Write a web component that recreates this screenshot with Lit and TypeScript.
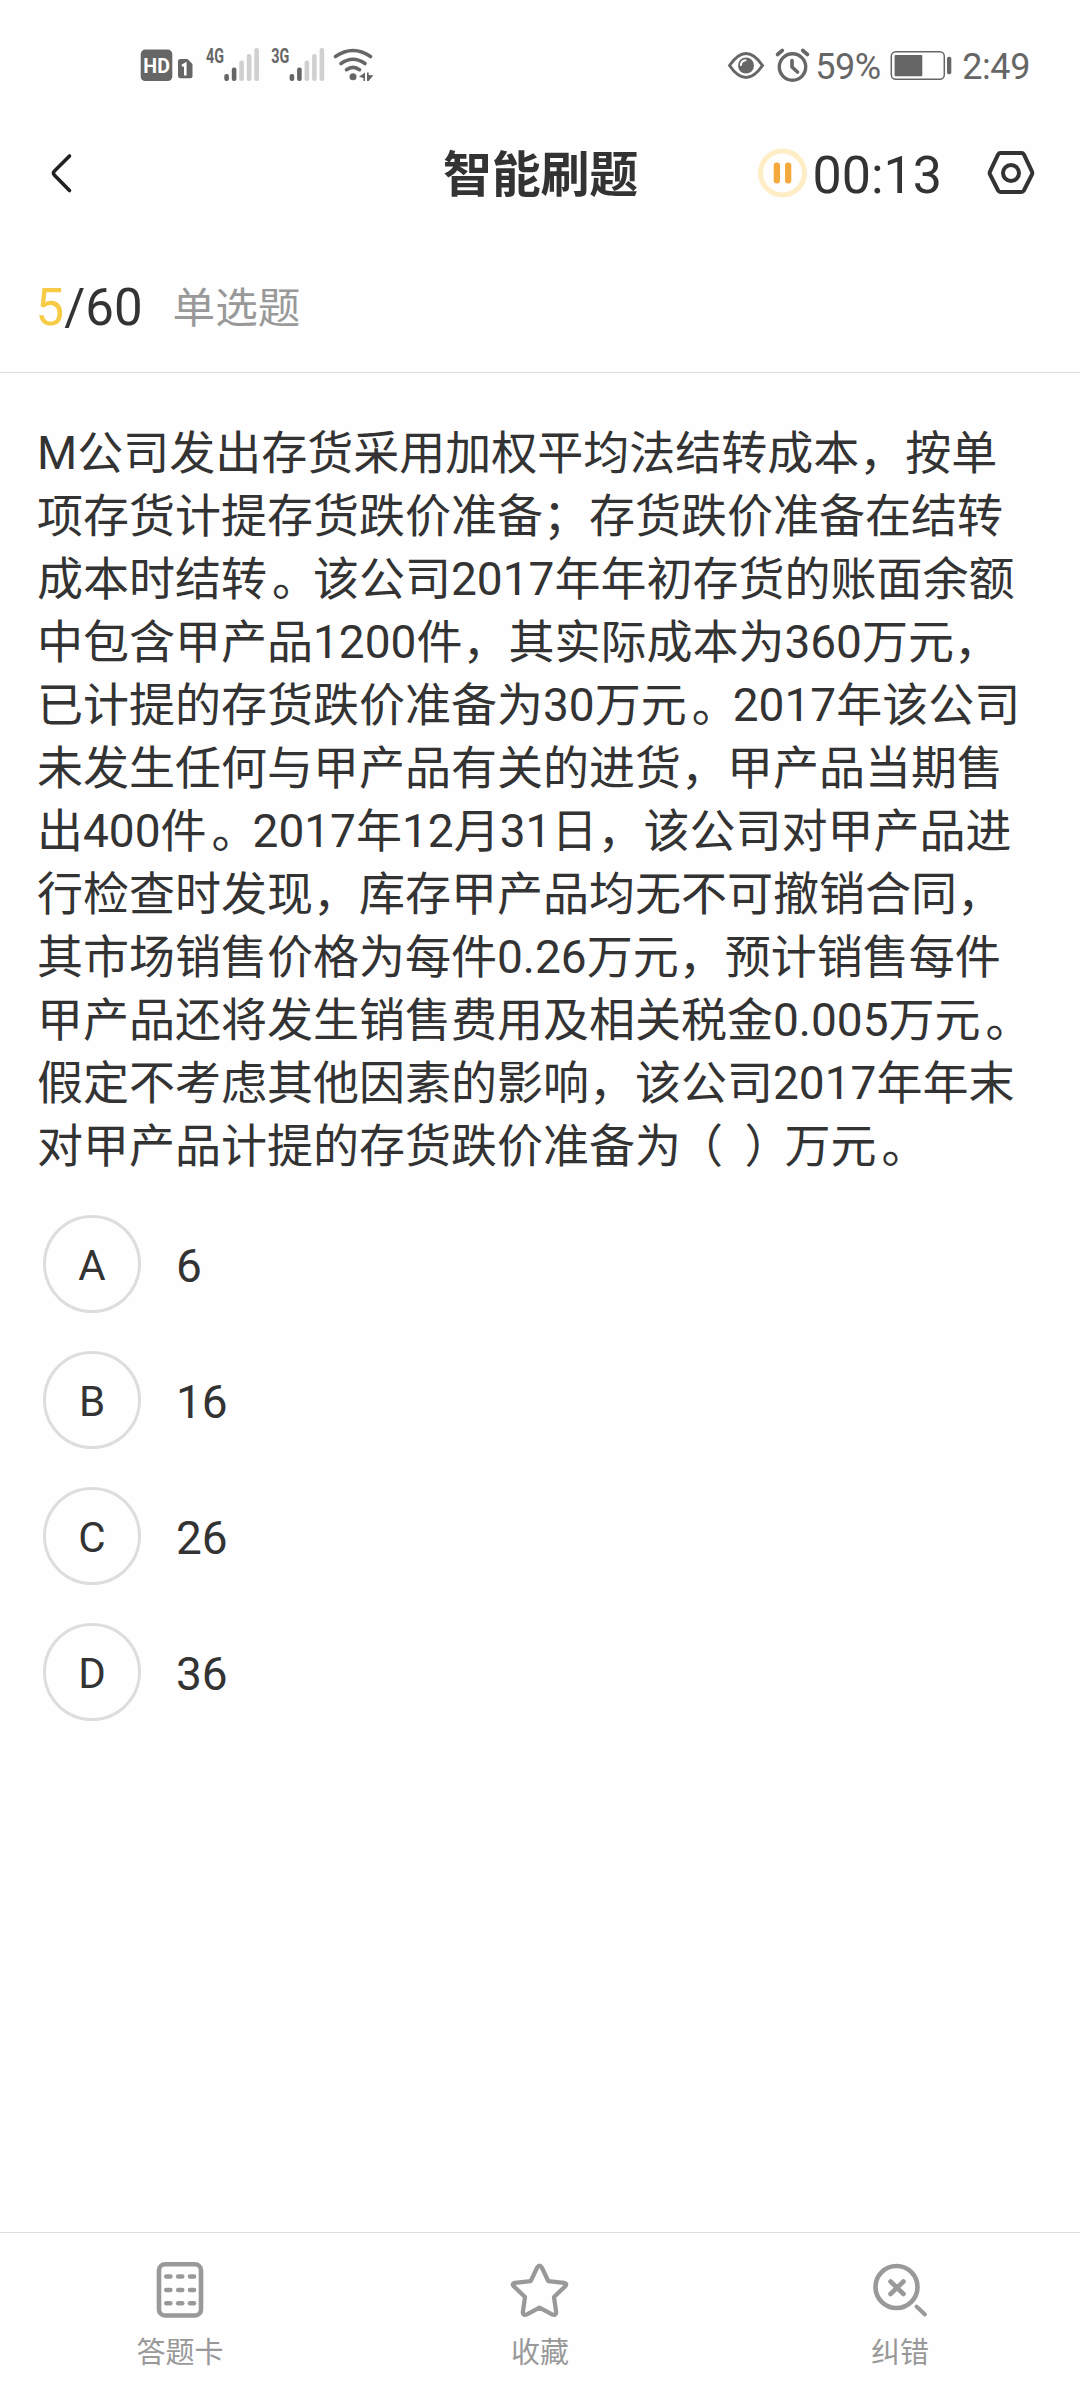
import { LitElement, html, css, svg } from "lit";
import { customElement, property, state } from "lit/decorators.js";

const FONT = css`Roboto, "Noto Sans CJK SC", sans-serif`;

const QUESTION_LINES = [
  "M公司发出存货采用加权平均法结转成本，按单",
  "项存货计提存货跌价准备；存货跌价准备在结转",
  "成本时结转。该公司2017年年初存货的账面余额",
  "中包含甲产品1200件，其实际成本为360万元，",
  "已计提的存货跌价准备为30万元。2017年该公司",
  "未发生任何与甲产品有关的进货，甲产品当期售",
  "出400件。2017年12月31日，该公司对甲产品进",
  "行检查时发现，库存甲产品均无不可撤销合同，",
  "其市场销售价格为每件0.26万元，预计销售每件",
  "甲产品还将发生销售费用及相关税金0.005万元。",
  "假定不考虑其他因素的影响，该公司2017年年末",
  "对甲产品计提的存货跌价准备为（ ）万元。",
];

const OPTIONS = [
  { key: "A", value: "6" },
  { key: "B", value: "16" },
  { key: "C", value: "26" },
  { key: "D", value: "36" },
];

// Full-width marks that sit closer to the middle of their cell.
const MARK_CLASS: Record<string, string> = { "。": "mark stop", "（": "mark open", "）": "mark close" };

@customElement("status-bar")
class StatusBar extends LitElement {
  static styles = css`
    :host {
      display: block;
      font-family: ${FONT};
      color: #666;
    }
    .bar {
      display: flex;
      align-items: center;
      justify-content: space-between;
      height: 130px;
      padding: 0 50px 0 140px;
      box-sizing: border-box;
    }
    .group {
      display: flex;
      align-items: center;
    }
    svg {
      display: block;
      flex: none;
    }
    .txt {
      font-size: 36px;
      line-height: 42px;
      white-space: nowrap;
      padding-top: 3px;
    }
    .pct {
      width: 67px;
      margin: 0 8px 0 4px;
      letter-spacing: -0.4px;
    }
    .time {
      margin-left: 10px;
      letter-spacing: -0.4px;
    }
    .hd {
      font-family: Roboto, sans-serif;
      font-weight: 700;
    }
    .net {
      font-family: Roboto, sans-serif;
      font-weight: 700;
    }
  `;

  private signal(label: string, x: number) {
    const tops = [74, 67.5, 60.5, 54, 48];
    return svg`
      <text class="net" x=${x} y="62.8" font-size="21" textLength="18" lengthAdjust="spacingAndGlyphs" fill="#666">${label}</text>
      ${tops.map(
        (t, i) => svg`<rect x=${x + 18.3 + i * 7.5} y=${t} width="4.6" height=${81 - t} rx="2" fill=${i < 2 ? "#666" : "#d0d0d0"}></rect>`
      )}
    `;
  }

  render() {
    return html`
      <div class="bar">
        <div class="group">
          <svg width="236" height="40" viewBox="140 45 236 40">
            <rect x="140.7" y="49.6" width="31.6" height="31.4" rx="4.5" fill="#666"></rect>
            <text class="hd" x="143.3" y="73" font-size="21" textLength="26.6" lengthAdjust="spacingAndGlyphs" fill="#fff">HD</text>
            <path d="M180.5 59h7l5 5v12.3a2 2 0 0 1-2 2h-10a2.5 2.5 0 0 1-2.5-2.5v-14.3a2.5 2.5 0 0 1 2.5-2.5z" fill="#666"></path>
            <path d="M182 65.8l3.3-1.8v11.5" fill="none" stroke="#fff" stroke-width="2.6"></path>
            ${this.signal("4G", 206)} ${this.signal("3G", 271.3)}
            <g fill="none" stroke="#666" stroke-width="3.6" stroke-linecap="round">
              <path d="M335.5 56.5q17.5-12 35 0"></path>
              <path d="M341 63.5q12-8.5 24 0"></path>
              <path d="M346.5 69.7q6.5-4.5 13 0"></path>
            </g>
            <circle cx="353" cy="76.8" r="3.5" fill="#666"></circle>
            <path d="M365 72.5v8.5h-1.6v-3l-4.4-1.2zM367 72.5h1.7v2.6l4.6 0.2-4.6 5.7h-1.7z" fill="#666"></path>
          </svg>
        </div>
        <div class="group">
          <svg width="84" height="40" viewBox="727 45 84 40">
            <path d="M729.5 65.5Q746 41.5 762.5 65.5Q746 89.5 729.5 65.5z" fill="none" stroke="#666" stroke-width="3"></path>
            <circle cx="746" cy="65.5" r="8" fill="#666"></circle>
            <path d="M740.8 65a5.5 5.5 0 0 1 4.7-4.7" fill="none" stroke="#fff" stroke-width="2" stroke-linecap="round"></path>
            <circle cx="792.5" cy="67" r="13.2" fill="none" stroke="#666" stroke-width="3.4"></circle>
            <path d="M777.5 54.5l4.8-4M802.7 50.5l4.8 4" stroke="#666" stroke-width="3.6" stroke-linecap="round"></path>
            <path d="M792 60.5v6.5l5.5 5" fill="none" stroke="#666" stroke-width="3.6" stroke-linecap="round" stroke-linejoin="round"></path>
          </svg>
          <span class="txt pct">59%</span>
          <svg width="62" height="40" viewBox="890 45 62 40">
            <rect x="891.3" y="51.8" width="53" height="27.5" rx="4.5" fill="none" stroke="#666" stroke-width="1.5"></rect>
            <rect x="894.6" y="55" width="27.7" height="21.3" rx="1" fill="#666"></rect>
            <rect x="947" y="56.8" width="4.3" height="17.5" rx="1.8" fill="#666"></rect>
          </svg>
          <span class="txt time">2:49</span>
        </div>
      </div>
    `;
  }
}

@customElement("quiz-header")
class QuizHeader extends LitElement {
  @property() time = "";

  static styles = css`
    :host {
      display: block;
      font-family: ${FONT};
      color: #333;
    }
    .bar {
      display: grid;
      grid-template-columns: 1fr auto 1fr;
      align-items: center;
      height: 86px;
      padding: 0 45px 0 49px;
    }
    .title {
      font-size: 49px;
      line-height: 60px;
      font-weight: 700;
      letter-spacing: -0.2px;
      padding-top: 6px;
      margin-right: 3px;
    }
    .right {
      display: flex;
      align-items: center;
      justify-content: flex-end;
    }
    .clock {
      font-size: 52px;
      line-height: 60px;
      margin: 6px 45px 0 5px;
    }
    svg {
      display: block;
    }
  `;

  render() {
    return html`
      <div class="bar">
        <svg width="24" height="42" viewBox="50 152 24 42">
          <path d="M70.5 156L55.5 171Q53.3 173 55.5 175.2L70.5 190.5" fill="none" stroke="#222" stroke-width="3.6" stroke-linecap="round"></path>
        </svg>
        <div class="title">智能刷题</div>
        <div class="right">
          <svg width="50" height="50" viewBox="758 148 50 50">
            <circle cx="782.5" cy="173" r="22" fill="none" stroke="#feedc5" stroke-width="5"></circle>
            <rect x="773.7" y="162.5" width="6.3" height="21" rx="3" fill="#f3a93c"></rect>
            <rect x="785" y="162.5" width="6.3" height="21" rx="3" fill="#f3a93c"></rect>
          </svg>
          <span class="clock">${this.time}</span>
          <svg width="48" height="46" viewBox="987 150 48 46">
            <path d="M1000.5 153h21q1.5 0 2.4 1.5l8 16.8q.8 1.7 0 3.4l-8 15.8q-.9 1.5-2.4 1.5h-21q-1.5 0-2.4-1.5l-8-15.8q-.8-1.7 0-3.4l8-16.8q.9-1.5 2.4-1.5z" fill="none" stroke="#333" stroke-width="4"></path>
            <circle cx="1011" cy="173" r="8" fill="none" stroke="#333" stroke-width="4"></circle>
          </svg>
        </div>
      </div>
    `;
  }
}

@customElement("option-row")
class OptionRow extends LitElement {
  @property() key = "";
  @property() value = "";

  static styles = css`
    :host {
      display: block;
      font-family: ${FONT};
      color: #333;
    }
    .row {
      display: flex;
      align-items: center;
      gap: 35px;
    }
    .key {
      display: flex;
      align-items: center;
      justify-content: center;
      width: 98px;
      height: 98px;
      box-sizing: border-box;
      border: 3px solid #ddd;
      border-radius: 50%;
      font-size: 42px;
      line-height: 50px;
      padding-top: 4px;
    }
    .value {
      font-size: 46px;
      line-height: 54px;
      padding-top: 4px;
    }
  `;

  render() {
    return html`
      <div class="row">
        <span class="key">${this.key}</span>
        <span class="value">${this.value}</span>
      </div>
    `;
  }
}

@customElement("tool-bar")
class ToolBar extends LitElement {
  static styles = css`
    :host {
      display: block;
      font-family: ${FONT};
      color: #999;
    }
    .bar {
      display: grid;
      grid-template-columns: repeat(3, 1fr);
      height: 168px;
      box-sizing: border-box;
      border-top: 1px solid #ddd;
      padding-top: 25px;
    }
    .item {
      display: flex;
      flex-direction: column;
      align-items: center;
      gap: 15px;
      font-size: 29px;
      line-height: 40px;
    }
    svg {
      display: block;
    }
    .line {
      fill: none;
      stroke: #999;
      stroke-linecap: round;
      stroke-linejoin: round;
    }
  `;

  render() {
    const rows = [2276.5, 2290, 2303.3];
    const cols = [165.8, 177.7, 189.5];
    return html`
      <div class="bar">
        <div class="item">
          <svg width="60" height="60" viewBox="149.5 2258 60 60">
            <rect class="line" x="158.5" y="2264.3" width="42" height="51.2" rx="6" stroke-width="4.6"></rect>
            ${rows.map((y) => cols.map((x) => svg`<path class="line" d="M${x} ${y}h4" stroke-width="4.6"></path>`))}
          </svg>
          <span>答题卡</span>
        </div>
        <div class="item">
          <svg width="60" height="60" viewBox="509.5 2258 60 60">
            <path class="line" stroke-width="4.3" d="M536.7 2267.5Q539 2263.7 541.3 2267.5L547.8 2281.2L563.5 2282.8Q567.3 2283.7 564.5 2286.5L553.5 2297L555.7 2312.5Q555.3 2315.8 552 2314.6L539 2307.6L526 2314.6Q522.7 2315.8 522.3 2312.5L524.5 2297L513.5 2286.5Q510.7 2283.7 514.5 2282.8L530.2 2281.2Z"></path>
          </svg>
          <span>收藏</span>
        </div>
        <div class="item">
          <svg width="60" height="60" viewBox="870 2258 60 60">
            <circle class="line" cx="896.5" cy="2287" r="21" stroke-width="4.6"></circle>
            <path class="line" d="M890.5 2281.5l13 12.5M903.5 2281.5l-13 12.5" stroke-width="4.6"></path>
            <path class="line" d="M916.5 2306.5l8.5 8" stroke-width="4"></path>
          </svg>
          <span>纠错</span>
        </div>
      </div>
    `;
  }
}

@customElement("app-root")
class AppRoot extends LitElement {
  @state() private current = 5;
  @state() private total = 60;

  static styles = css`
    :host {
      display: block;
      font-family: ${FONT};
      color: #333;
    }
    .screen {
      display: flex;
      flex-direction: column;
      height: 2400px;
      background: #fefefe;
    }
    .progress {
      display: flex;
      align-items: flex-start;
      gap: 30px;
      height: 157px;
      box-sizing: border-box;
      padding: 62px 0 0 35.5px;
      border-bottom: 1px solid #ddd;
      font-size: 51px;
      line-height: 60px;
    }
    .current {
      color: #f8cb46;
    }
    .kind {
      font-size: 42.6px;
      color: #999;
    }
    .question {
      padding: 49px 0 0 37px;
      font-size: 46px;
      line-height: 63px;
    }
    .line {
      white-space: pre;
    }
    .mark {
      font-feature-settings: "halt";
    }
    .stop {
      margin: 0 18px 0 5px;
    }
    .open {
      margin: 0 4px 0 19px;
    }
    .close {
      margin: 0 17px 0 6px;
    }
    .options {
      display: flex;
      flex-direction: column;
      gap: 38px;
      padding: 37px 0 0 43px;
    }
    .tools {
      margin-top: auto;
    }
  `;

  private renderLine(text: string) {
    const parts = text.split(/([。（）])/).filter((p) => p !== "");
    return html`<div class="line">${parts.map((p) => (MARK_CLASS[p] ? html`<span class=${MARK_CLASS[p]}>${p}</span>` : p))}</div>`;
  }

  render() {
    return html`
      <div class="screen">
        <status-bar></status-bar>
        <quiz-header time="00:13"></quiz-header>
        <div class="progress">
          <span><span class="current">${this.current}</span>/${this.total}</span>
          <span class="kind">单选题</span>
        </div>
        <div class="question">${QUESTION_LINES.map((l) => this.renderLine(l))}</div>
        <div class="options">
          ${OPTIONS.map((o) => html`<option-row .key=${o.key} .value=${o.value}></option-row>`)}
        </div>
        <tool-bar class="tools"></tool-bar>
      </div>
    `;
  }
}
